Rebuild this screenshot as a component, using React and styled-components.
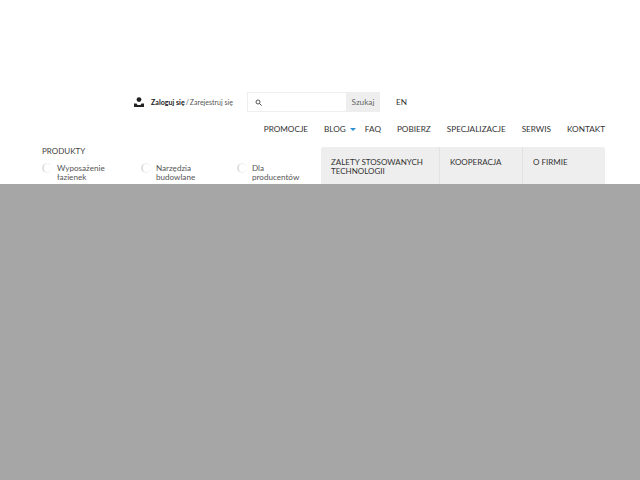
import React from "react";
import styled, { createGlobalStyle } from "styled-components";

const Global = createGlobalStyle`
html, body { margin: 0; padding: 0; height: 100%; background: #fff; overflow: hidden; }
body { font-family: "Lato", "Liberation Sans", sans-serif; color: #222; }
`;

const Page = styled.div`
  width: 640px;
  height: 480px;
  display: flex;
  flex-direction: column;
  padding-top: 92px;
  box-sizing: border-box;
  overflow: hidden;
`;
const TopBar = styled.div`
  display: flex;
  align-items: center;
  height: 20px;
  padding-left: 134px;
`;
const Login = styled.div`
  display: flex;
  align-items: center;
  width: 113px;
  font-size: 7px;
  color: #555;
  white-space: nowrap;
  b { color: #222; margin-left: 7px; margin-right: 1px; font-size: 7.1px; }
  span { margin-left: 1px; }
`;
const Search = styled.div`
  display: flex;
  width: 133px;
  height: 20px;
  box-sizing: border-box;
  border: 1px solid #eee;
  border-right: 0;
  align-items: center;
`;
const SearchInput = styled.div`
  flex: 1;
  padding-left: 7px;
  display: flex;
  align-items: center;
`;
const SearchBtn = styled.div`
  width: 34px;
  height: 20px;
  margin: -1px 0;
  background: #eeeeee;
  font-size: 8.2px;
  color: #666;
  display: flex;
  align-items: center;
  justify-content: center;
`;
const Lang = styled.div`
  margin-left: 16px;
  font-size: 8.2px;
  color: #333;
`;
const Nav = styled.nav`
  display: flex;
  justify-content: flex-end;
  align-items: center;
  height: 14px;
  margin-top: 10px;
  padding-right: 35px;
`;
const NavItem = styled.a`
  font-size: 8.2px;
  color: #333;
  margin-left: ${(p) => p.$gap}px;
  white-space: nowrap;
  display: flex;
  align-items: center;
`;
const Caret = styled.i`
  display: block;
  width: 0;
  height: 0;
  margin-left: 4px;
  border-left: 3px solid transparent;
  border-right: 3px solid transparent;
  border-top: 3px solid #2a8fd0;
`;
const Row = styled.div`
  display: flex;
  justify-content: space-between;
  height: 37px;
  margin-top: 11px;
  padding: 0 35px 0 42px;
`;
const Products = styled.div`
  width: 279px;
`;
const ProductsTitle = styled.div`
  font-size: 8px;
  color: #444;
  line-height: 9px;
`;
const ProductList = styled.div`
  display: flex;
  margin-top: 7px;
`;
const Product = styled.div`
  display: flex;
  width: ${(p) => p.$w}px;
  font-size: 8.1px;
  line-height: 8.5px;
  color: #555;
  span { margin-left: 5px; margin-top: 1px; }
`;
const Spinner = styled.div`
  width: 8px;
  height: 8px;
  border-radius: 50%;
  flex: none;
  border: 0 solid transparent;
  border-left: 2px solid #e0e0e0;
  border-bottom: 1px solid #f0f0f0;
  border-top: 1px solid #f0f0f0;
`;
const Tabs = styled.div`
  display: flex;
  width: 284px;
  background: #eeeeee;
  border-radius: 2px 2px 0 0;
`;
const Tab = styled.div`
  width: ${(p) => p.$w}px;
  box-sizing: border-box;
  padding: 11px 0 0 10px;
  font-size: 8px;
  line-height: 8.5px;
  color: #333;
  border-right: ${(p) => (p.$last ? "0" : "1px solid #e2e2e2")};
`;
const Overlay = styled.div`
  flex: 1;
  background: #a6a6a6;
`;

const UserIcon = () => (
  <svg width="10" height="10" viewBox="0 0 10 10" fill="#222">
    <circle cx="5" cy="2.6" r="2.4" />
    <path d="M0 10V6.5h2.5L3.5 8h3l1-1.5H10V10z" />
  </svg>
);
const SearchIcon = () => (
  <svg width="7" height="7" viewBox="0 0 7 7" fill="none" stroke="#444" strokeWidth="0.9">
    <circle cx="3" cy="3" r="2" />
    <path d="M4.5 4.5L6.6 6.6" />
  </svg>
);

export default function App() {
  return (
    <Page>
      <Global />
      <TopBar>
        <Login>
          <UserIcon />
          <b>Zaloguj się</b>/<span>Zarejestruj się</span>
        </Login>
        <Search>
          <SearchInput><SearchIcon /></SearchInput>
          <SearchBtn>Szukaj</SearchBtn>
        </Search>
        <Lang>EN</Lang>
      </TopBar>
      <Nav>
        <NavItem $gap={0}>PROMOCJE</NavItem>
        <NavItem $gap={16}>BLOG<Caret /></NavItem>
        <NavItem $gap={9}>FAQ</NavItem>
        <NavItem $gap={16}>POBIERZ</NavItem>
        <NavItem $gap={16}>SPECJALIZACJE</NavItem>
        <NavItem $gap={16}>SERWIS</NavItem>
        <NavItem $gap={16}>KONTAKT</NavItem>
      </Nav>
      <Row>
        <Products>
          <ProductsTitle>PRODUKTY</ProductsTitle>
          <ProductList>
            <Product $w={99}><Spinner /><span>Wyposażenie<br />łazienek</span></Product>
            <Product $w={96}><Spinner /><span>Narzędzia<br />budowlane</span></Product>
            <Product $w={84}><Spinner /><span>Dla<br />producentów</span></Product>
          </ProductList>
        </Products>
        <Tabs>
          <Tab $w={119}>ZALETY STOSOWANYCH<br />TECHNOLOGII</Tab>
          <Tab $w={83}>KOOPERACJA</Tab>
          <Tab $w={82} $last>O FIRMIE</Tab>
        </Tabs>
      </Row>
      <Overlay />
    </Page>
  );
}
